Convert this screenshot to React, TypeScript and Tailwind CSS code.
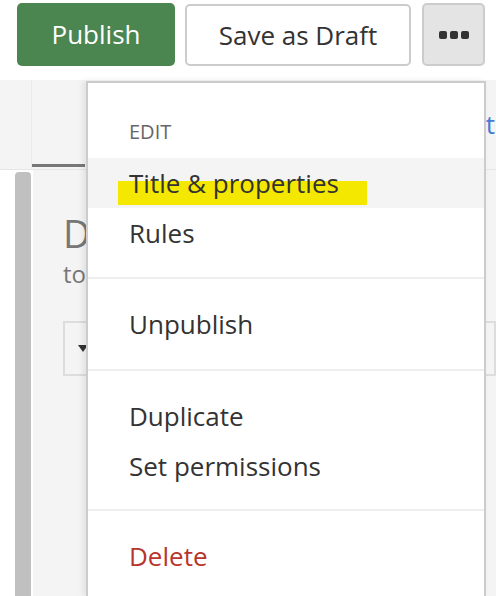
import React from 'react';

const font = { fontFamily: '"Open Sans", "Noto Sans", sans-serif' };

const MenuItem = ({ label, danger, hover, children }: { label: string; danger?: boolean; hover?: boolean; children?: React.ReactNode }) => (
  <div
    className={`relative h-[50px] flex items-center pl-[41px] text-[26px] ${hover ? 'bg-[#f4f4f4]' : ''} ${danger ? 'text-[#b8352d]' : 'text-[#333]'}`}
  >
    {children}
    <span className="relative">{label}</span>
  </div>
);

const Separator = () => <div className="h-[2px] bg-[#eeeeee]" />;

const App = () => {
  return (
    <div className="relative w-[496px] h-[596px] overflow-hidden bg-white" style={font}>
      {/* toolbar */}
      <div className="h-[80px] flex items-start pt-[3px] pl-[17px]">
        <button className="w-[158px] h-[63px] rounded-[5px] bg-[#4b8651] text-white text-[26px]">Publish</button>
        <button className="ml-[10px] mt-[1px] w-[226px] h-[62px] rounded-[5px] border-2 border-[#cccccc] bg-white text-[#333] text-[26px]">
          Save as Draft
        </button>
        <button className="ml-[11px] w-[63px] h-[63px] rounded-[5px] border-2 border-[#cccccc] bg-[#e4e4e4] flex items-center justify-center gap-[3px]">
          <span className="w-[8px] h-[8px] rounded-[2px] bg-[#333]" />
          <span className="w-[8px] h-[8px] rounded-[2px] bg-[#333]" />
          <span className="w-[8px] h-[8px] rounded-[2px] bg-[#333]" />
        </button>
      </div>

      {/* tab band */}
      <div className="h-[90px] flex bg-[#f4f4f4] border-b border-[#e6e6e6]">
        <div className="w-[32px] border-r border-[#ebebeb]" />
        <div className="w-[53px] flex flex-col justify-end">
          <div className="h-[3px] bg-[#777] mb-[2px]" />
        </div>
        <div className="flex-1 flex justify-end items-start pt-[26px]">
          <span className="text-[26px] text-[#4a78d6] leading-[36px] mr-[1px]">Edit</span>
        </div>
      </div>

      {/* content */}
      <div className="flex h-[426px]">
        <div className="w-[15px] bg-white" />
        <div className="w-[16px] mt-[2px] bg-[#c0c0c0] rounded-t-[4px]" />
        <div className="w-[2px] bg-white" />
        <div className="flex-1 bg-[#f4f4f4] pl-[30px] pt-[38px]">
          <div className="text-[38px] leading-[50px] text-[#777]">D</div>
          <div className="text-[24px] leading-[32px] text-[#777]">to</div>
          <div className="mt-[31px] h-[55px] border-2 border-[#dddddd] flex items-center pl-[13px]">
            <span className="w-0 h-0 border-l-[5px] border-r-[5px] border-t-[7px] border-l-transparent border-r-transparent border-t-[#333]" />
          </div>
        </div>
      </div>

      {/* dropdown menu */}
      <div className="absolute left-[86px] top-[81px] bottom-0 w-[400px] bg-white border-2 border-b-0 border-[#cccccc] shadow-[-3px_0_6px_rgba(0,0,0,0.08)]">
        <div className="pt-[37px] pb-[19px]">
          <div className="pl-[41px] text-[20px] leading-[24px] text-[#666] mb-[14px]">EDIT</div>
          <MenuItem label="Title & properties" hover>
            <span className="absolute left-[30px] top-[23px] w-[249px] h-[24px] bg-[#f5e800]" />
          </MenuItem>
          <MenuItem label="Rules" />
        </div>
        <Separator />
        <div className="py-[20px]">
          <MenuItem label="Unpublish" />
        </div>
        <Separator />
        <div className="pt-[20px] pb-[18px]">
          <MenuItem label="Duplicate" />
          <MenuItem label="Set permissions" />
        </div>
        <Separator />
        <div className="pt-[20px]">
          <MenuItem label="Delete" danger />
        </div>
      </div>
    </div>
  );
};

export default App;
